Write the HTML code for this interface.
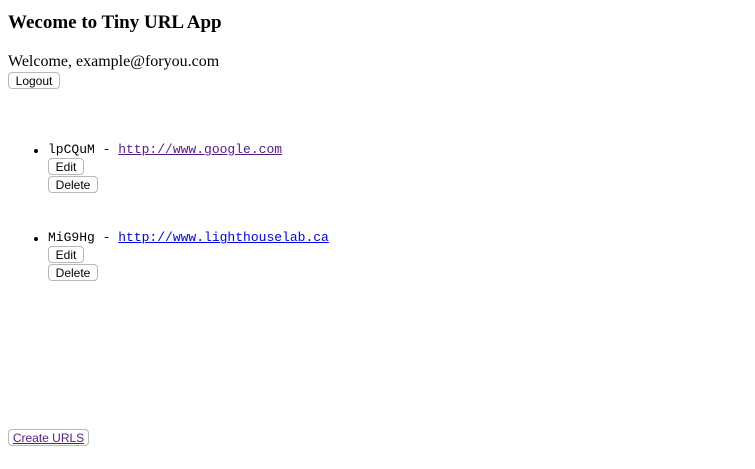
<!DOCTYPE html>
<html><head><style>
body{margin:0;background:#fff;font-family:"Liberation Serif",serif;color:#000;}
.a{position:absolute;white-space:nowrap;}
.btn{position:absolute;box-sizing:border-box;border:1px solid #b8b8b8;border-radius:4px;background:#fff;font:12px "Liberation Sans",sans-serif;text-align:center;line-height:16px;height:17px;}
.m{font:13px "Liberation Mono",monospace;}
.m a{color:#551a8b;text-decoration:underline;}
.dot{position:absolute;width:4px;height:4px;border-radius:50%;background:#000;}
</style></head><body>
<div class="a" style="left:8px;top:12px;font-size:19px;font-weight:bold;">Wecome to Tiny URL App</div>
<div class="a" style="left:8px;top:53px;font-size:16px;">Welcome, example@foryou.com</div>
<div class="btn" style="left:8px;top:72px;width:52px;">Logout</div>

<div class="dot" style="left:34px;top:149px;"></div>
<div class="a m" style="left:48px;top:142px;">lpCQuM - <a>http://www.google.com</a></div>
<div class="btn" style="left:48px;top:158px;width:36px;">Edit</div>
<div class="btn" style="left:48px;top:176px;width:50px;">Delete</div>

<div class="dot" style="left:34px;top:237px;"></div>
<div class="a m" style="left:48px;top:230px;">MiG9Hg - <a style="color:#0000ee">http://www.lighthouselab.ca</a></div>
<div class="btn" style="left:48px;top:246px;width:36px;">Edit</div>
<div class="btn" style="left:48px;top:264px;width:50px;">Delete</div>

<div class="btn" style="left:8px;top:429px;width:81px;"><span style="color:#551a8b;text-decoration:underline;">Create URLS</span></div>
</body></html>
